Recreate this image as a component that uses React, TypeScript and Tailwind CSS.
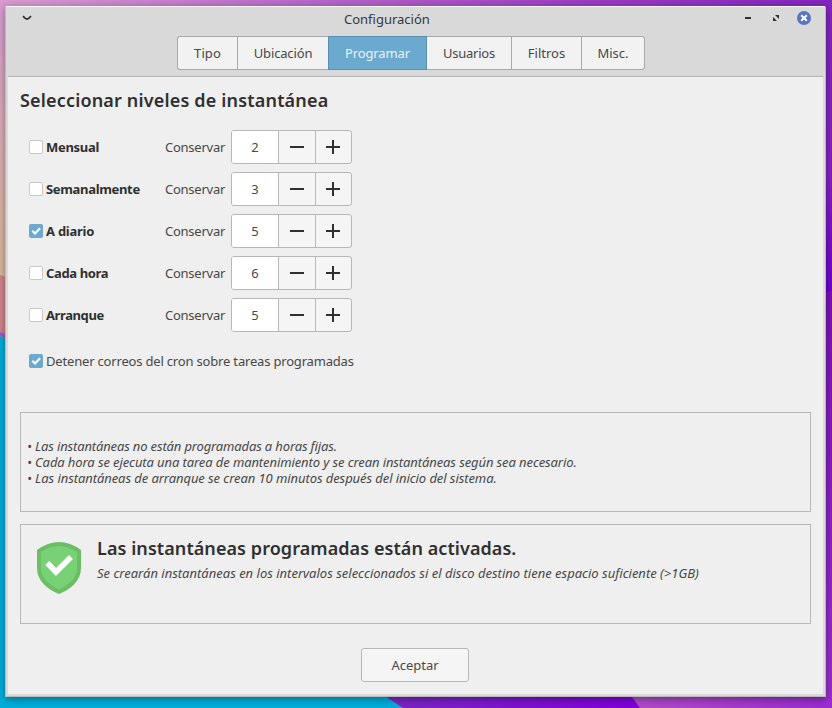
import React from "react";

const tabs = [
  { label: "Tipo", box: "w-[60px]", text: "tracking-[0.1px]" },
  { label: "Ubicación", box: "w-[91px]", text: "tracking-[-0.15px]" },
  { label: "Programar", box: "w-[99px]", text: "tracking-[-0.1px]" },
  { label: "Usuarios", box: "w-[85px]", text: "tracking-[-0.25px]" },
  { label: "Filtros", box: "w-[70px]", text: "" },
  { label: "Misc.", box: "w-[63px]", text: "" },
];

const levels = [
  { label: "Mensual", text: "tracking-[-0.3px]", on: false, keep: 2 },
  { label: "Semanalmente", text: "tracking-[-0.33px]", on: false, keep: 3 },
  { label: "A diario", text: "tracking-[-0.25px]", on: true, keep: 5 },
  { label: "Cada hora", text: "tracking-[-0.36px]", on: false, keep: 6 },
  { label: "Arranque", text: "tracking-[-0.4px]", on: false, keep: 5 },
];

function Desktop() {
  return (
    <svg className="absolute inset-0" width="832" height="708" viewBox="0 0 832 708">
      <defs>
        <linearGradient id="top" x1="0" x2="1" y1="0" y2="0">
          <stop offset="0" stopColor="#d99cd0" />
          <stop offset="0.33" stopColor="#bb6fcd" />
          <stop offset="0.67" stopColor="#a040c4" />
          <stop offset="1" stopColor="#8325bf" />
        </linearGradient>
        <linearGradient id="left" x1="0" x2="0" y1="0" y2="1">
          <stop offset="0" stopColor="#d99cd0" />
          <stop offset="0.45" stopColor="#dcaeb8" />
          <stop offset="1" stopColor="#dcbc9e" />
        </linearGradient>
        <linearGradient id="right" x1="0" x2="0" y1="0" y2="1">
          <stop offset="0" stopColor="#8325bf" />
          <stop offset="0.6" stopColor="#8420c4" />
          <stop offset="1" stopColor="#6c00d0" />
        </linearGradient>
        <linearGradient id="lower" x1="0" x2="0" y1="0" y2="1">
          <stop offset="0" stopColor="#7d10b8" />
          <stop offset="1" stopColor="#9b2ed2" />
        </linearGradient>
        <linearGradient id="violet" x1="0" x2="1" y1="0" y2="0">
          <stop offset="0" stopColor="#7a28c4" />
          <stop offset="1" stopColor="#8000dc" />
        </linearGradient>
        <linearGradient id="pink" x1="0" x2="1" y1="0" y2="0">
          <stop offset="0" stopColor="#b14cc8" />
          <stop offset="1" stopColor="#982bd0" />
        </linearGradient>
      </defs>
      <rect width="832" height="708" fill="url(#top)" />
      <rect y="8" width="12" height="270" fill="url(#left)" />
      <path d="M0 275L12 279V336L0 332Z" fill="#d4858d" />
      <path d="M0 332L12 336V342L0 336Z" fill="#a55cc8" />
      <path d="M0 336L12 342V690H376L403 708H0Z" fill="#00aedb" />
      <path d="M376 690L403 708H641L627 690Z" fill="url(#violet)" />
      <path d="M627 690L640 708H832V690Z" fill="url(#pink)" />
      <rect x="820" y="8" width="12" height="286" fill="url(#right)" />
      <path d="M820 296L832 290V708H820Z" fill="url(#lower)" />
    </svg>
  );
}

function Check({ on }: { on: boolean }) {
  return on ? (
    <span className="h-[14px] w-[14px] shrink-0 rounded-[2px] bg-[#6ca9cf]">
      <svg width="14" height="14" viewBox="0 0 14 14">
        <path d="M3.3 6.8L6 9.5L11.1 4.3" fill="none" stroke="#fff" strokeWidth="2.2" />
      </svg>
    </span>
  ) : (
    <span className="h-[14px] w-[14px] shrink-0 rounded-[2px] border border-[#c9c9c9] bg-white" />
  );
}

function Spin({ value }: { value: number }) {
  return (
    <div className="flex h-[34px] w-[121px] overflow-hidden rounded-[3px] border border-[#b7b7b7] bg-[#f5f5f5]">
      <div className="flex w-[46px] items-center justify-center bg-white text-[13px]">{value}</div>
      <div className="flex w-[37px] items-center justify-center border-l border-[#b7b7b7]">
        <svg width="14" height="14" shapeRendering="crispEdges">
          <path d="M0 6h14v2h-14z" fill="#303030" />
        </svg>
      </div>
      <div className="flex w-[36px] items-center border-l border-[#b7b7b7] pl-[10px]">
        <svg width="14" height="14" shapeRendering="crispEdges">
          <path d="M0 6h14v2h-14zM6 0h2v14h-2z" fill="#303030" />
        </svg>
      </div>
    </div>
  );
}

export default function App() {
  return (
    <div className="relative h-[708px] w-[832px] overflow-hidden pl-[5px] pt-[6px] font-['Noto_Sans','Open_Sans',sans-serif] text-[13px] leading-4 text-[#484848]">
      <Desktop />
      <div className="relative flex h-[691px] w-[821px] flex-col rounded-t-[2px] border border-t-white border-r-[#bababa] border-b-[#bababa] border-l-[#bababa] bg-[#d9d9d9] px-[2px] pb-[2px] shadow-[0_2px_8px_rgba(0,0,0,0.4)]">
        <header className="flex h-[70px] flex-col border-b border-[#b5b5b5]">
          <div className="flex h-[29px] items-start">
            <svg className="ml-[14px] mt-[8px]" width="10" height="6" viewBox="0 0 10 6">
              <path d="M1 1.2L3 3.2Q5 4.8 7 3.2L9 1.2" fill="none" stroke="#303030" strokeWidth="1.7" />
            </svg>
            <h1 className="ml-[312px] mt-[4px] w-[100px] whitespace-nowrap text-[#383838]">Configuración</h1>
            <svg className="ml-[300px] mt-[3px]" width="72" height="16" viewBox="0 0 72 16">
              <rect x="1" y="7" width="6" height="2" fill="#303030" />
              <path d="M31 5h4v4zM29 7l4 4h-4z" fill="#303030" />
              <circle cx="60" cy="8" r="7" fill="#5b73c4" />
              <path d="M57.2 5.2l5.6 5.6M62.8 5.2l-5.6 5.6" stroke="#fff" strokeWidth="2" />
            </svg>
          </div>
          <nav className="ml-[169px] flex h-[34px]">
            {tabs.map((t, i) => (
              <button
                key={t.label}
                className={`${t.box} ${t.text} flex items-center justify-center whitespace-nowrap border-y ${
                  i === 2 ? "border-x border-[#5c8fb0] bg-[#6ca9cf] text-[#e9f3f9]" : "border-[#a9a9a9] bg-[#f2f2f2]"
                } ${i === 0 ? "rounded-l-[3px] border-l" : ""} ${i === 1 ? "border-l" : ""} ${i > 2 ? "border-r" : ""} ${
                  i === 5 ? "rounded-r-[3px]" : ""
                }`}
              >
                {t.label}
              </button>
            ))}
          </nav>
        </header>
        <main className="flex flex-1 flex-col bg-[#efefef] px-[12px] pt-[11px]">
          <h2 className="whitespace-nowrap text-[18px] font-semibold leading-[24px] tracking-[0.17px] text-[#303030]">
            Seleccionar niveles de instantánea
          </h2>
          <div className="mt-[18px] flex flex-col gap-2 pl-[9px]">
            {levels.map((l) => (
              <div key={l.label} className="flex items-center">
                <Check on={l.on} />
                <span className={`${l.text} ml-[3px] w-[119px] whitespace-nowrap font-bold text-[#303030]`}>{l.label}</span>
                <span className="w-[66px] whitespace-nowrap tracking-[-0.25px]">Conservar</span>
                <Spin value={l.keep} />
              </div>
            ))}
          </div>
          <div className="mt-[21px] flex h-4 items-center gap-[3px] pl-[9px]">
            <Check on />
            <span className="whitespace-nowrap tracking-[-0.18px]">Detener correos del cron sobre tareas programadas</span>
          </div>
          <section className="mt-[43px] flex h-[100px] w-[791px] flex-col justify-center whitespace-nowrap border border-[#b7b7b7] pl-[6px] italic">
            <p className="tracking-[-0.15px]">• Las instantáneas no están programadas a horas fijas.</p>
            <p className="tracking-[-0.1px]">
              • Cada hora se ejecuta una tarea de mantenimiento y se crean instantáneas según sea necesario.
            </p>
            <p className="tracking-[-0.075px]">
              • Las instantáneas de arranque se crean 10 minutos después del inicio del sistema.
            </p>
          </section>
          <section className="mt-[12px] flex h-[100px] w-[791px] whitespace-nowrap border border-[#b7b7b7] pl-[16px] pt-[11px]">
            <svg className="mt-[6px] shrink-0" width="44" height="52" viewBox="0 0 44 52">
              <path d="M0 8Q22 -8 44 8V26C44 39 34 47 22 52C10 47 0 39 0 26Z" fill="#6cbe66" />
              <path d="M4 10Q22 -2 40 10V26C40 37 31 43 22 47.5C13 43 4 37 4 26Z" fill="#79d176" />
              <path d="M10.3 21L19 30L34 15" fill="none" stroke="#fff" strokeWidth="5.6" />
            </svg>
            <div className="ml-[16px]">
              <h3 className="text-[18px] font-semibold leading-[24px] tracking-[0.07px] text-[#303030]">
                Las instantáneas programadas están activadas.
              </h3>
              <p className="mt-[5px] italic">
                Se crearán instantáneas en los intervalos seleccionados si el disco destino tiene espacio suficiente (&gt;1GB)
              </p>
            </div>
          </section>
          <button className="ml-[341px] mt-[24px] h-[34px] w-[108px] rounded-[3px] border border-[#b7b7b7] bg-[#f5f5f5]">
            Aceptar
          </button>
        </main>
      </div>
    </div>
  );
}
